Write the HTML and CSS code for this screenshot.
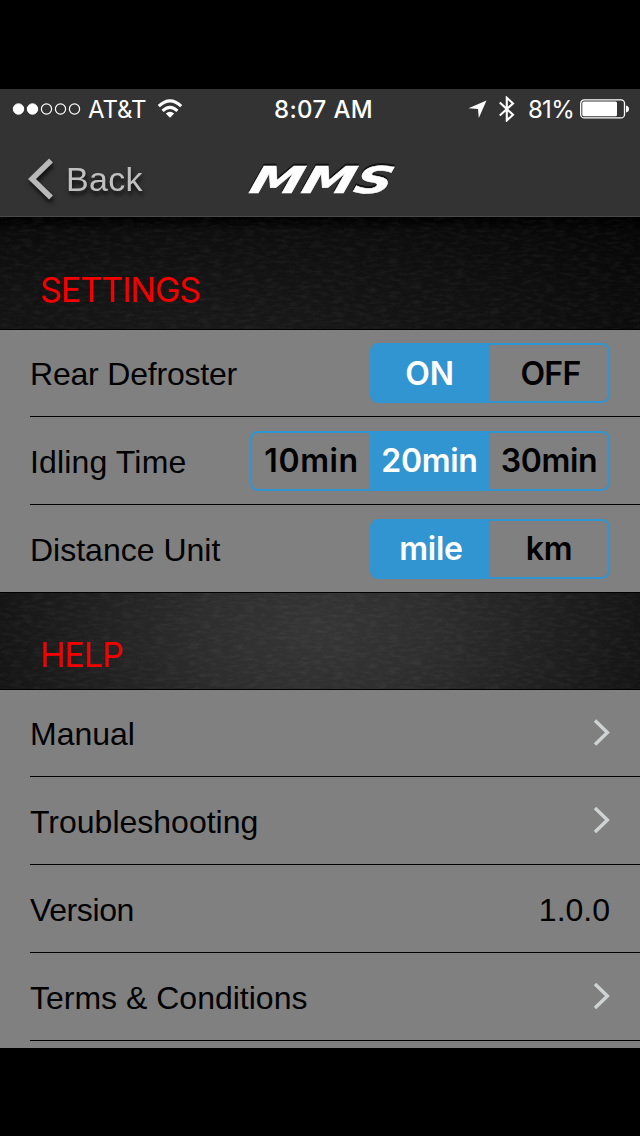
FILE: index.html
```html
<!DOCTYPE html>
<html lang="en">
<head>
    <meta charset="utf-8">
    <title>MMS - Settings</title>
    <link rel="stylesheet" href="styles.css">
</head>
<body>
    <div class="screen">
        <header class="header">
            <div class="statusbar">
                <div class="status-left">
                    <svg width="69" height="14" viewBox="0 0 69 14">
                        <g fill="#fff" stroke="#fff">
                            <circle cx="6.5" cy="7" r="5.2"/>
                            <circle cx="20.5" cy="7" r="5.2"/>
                        </g>
                        <g fill="none" stroke="#fff" stroke-width="1.2">
                            <circle cx="34.5" cy="7" r="5.1"/>
                            <circle cx="48.5" cy="7" r="5.1"/>
                            <circle cx="62.5" cy="7" r="5.1"/>
                        </g>
                    </svg>
                    <span class="carrier">AT&amp;T</span>
                    <svg class="wifi" width="26" height="20" viewBox="0 0 26 20">
                        <g fill="none" stroke="#fff" stroke-width="3">
                            <path d="M1.8 7.2 Q13 -3.4 24.2 7.2"/>
                            <path d="M5.6 11.8 Q13 4.8 20.4 11.8"/>
                        </g>
                        <path d="M8.8 14.6 Q13 10.8 17.2 14.6 L13 18.8 Z" fill="#fff"/>
                    </svg>
                </div>
                <div class="clock">8:07 AM</div>
                <div class="status-right">
                    <svg class="location" width="19" height="19" viewBox="0 0 19 19">
                        <path d="M18.5 .5 L10.8 18 L10 9 L.5 8.2 Z" fill="#fff"/>
                    </svg>
                    <svg class="bluetooth" width="16" height="26" viewBox="0 0 16 26">
                        <path d="M.8 6.6 L14 18.8 L7.8 24.4 V1.8 L14 7.4 L.8 19.6" fill="none" stroke="#fff" stroke-width="2.1"/>
                    </svg>
                    <span class="percent">81%</span>
                    <svg class="battery" width="49" height="20" viewBox="0 0 49 20">
                        <rect x=".7" y=".9" width="43.8" height="18" rx="3.5" fill="none" stroke="#fff" stroke-width="1.3"/>
                        <rect x="2.3" y="2.5" width="34.7" height="14.8" rx="1.5" fill="#fff"/>
                        <path d="M46 6.4 Q49 7.2 49 9.9 Q49 12.6 46 13.4 Z" fill="#fff"/>
                    </svg>
                </div>
            </div>
            <nav class="navbar">
                <a class="back">
                    <svg width="28" height="44" viewBox="0 0 28 44">
                        <path d="M23 2.5 L4 21 L23 39.5" fill="none" stroke="#b8b8b8" stroke-width="5.5"/>
                    </svg>
                    <span>Back</span>
                </a>
                <svg class="logo" width="160" height="60" viewBox="0 0 160 60">
                    <text x="20" y="43" transform="skewX(-16)" textLength="142" lengthAdjust="spacingAndGlyphs">MMS</text>
                </svg>
            </nav>
        </header>

        <section>
            <h2 class="title title-settings">
                <svg class="grain"><rect width="100%" height="100%" filter="url(#leather)"/></svg>
                <span>SETTINGS</span>
            </h2>
            <div class="list">
                <div class="row">
                    <span class="label defroster">Rear Defroster</span>
                    <div class="segmented">
                        <button class="active on">ON</button>
                        <button class="off">OFF</button>
                    </div>
                </div>
                <div class="row">
                    <span class="label idling">Idling Time</span>
                    <div class="segmented three">
                        <button class="ten">10min</button>
                        <button class="active">20min</button>
                        <button>30min</button>
                    </div>
                </div>
                <div class="row last">
                    <span class="label">Distance Unit</span>
                    <div class="segmented">
                        <button class="active">mile</button>
                        <button>km</button>
                    </div>
                </div>
            </div>
        </section>

        <section>
            <h2 class="title title-help">
                <svg class="grain"><rect width="100%" height="100%" filter="url(#leather)"/></svg>
                <span>HELP</span>
            </h2>
            <div class="list">
                <div class="row">
                    <span class="label">Manual</span>
                    <svg class="chevron" width="18" height="28" viewBox="0 0 18 28"><path d="M3 1.5 L15.4 13.5 L3 25.5"/></svg>
                </div>
                <div class="row">
                    <span class="label">Troubleshooting</span>
                    <svg class="chevron" width="18" height="28" viewBox="0 0 18 28"><path d="M3 1 L15.4 13 L3 25"/></svg>
                </div>
                <div class="row">
                    <span class="label version">Version</span>
                    <span class="label">1.0.0</span>
                </div>
                <div class="row">
                    <span class="label">Terms &amp; Conditions</span>
                    <svg class="chevron" width="18" height="28" viewBox="0 0 18 28"><path d="M3 1 L15.4 13 L3 25"/></svg>
                </div>
            </div>
        </section>
    </div>

    <svg class="defs" width="0" height="0">
        <filter id="leather" x="0" y="0" width="100%" height="100%">
            <feTurbulence type="fractalNoise" baseFrequency="0.09 0.32" numOctaves="3" seed="4"/>
            <feColorMatrix values="0 0 0 0 1  0 0 0 0 1  0 0 0 0 1  1.1 0 0 0 -0.45"/>
        </filter>
    </svg>
</body>
</html>
```

FILE: styles.css
```css
* {
    box-sizing: border-box;
}
body {
    margin: 0;
    padding-top: 89px;
    height: 1136px;
    background: #000;
    font-family: "Liberation Sans", Arial, sans-serif;
    overflow: hidden;
}
svg {
    display: block;
    flex-shrink: 0;
}
.screen {
    height: 959px;
    background: #808080;
    overflow: hidden;
}

/* header */
.header {
    height: 128px;
    background: #333;
    border-bottom: 1px solid #4a4a4a;
    color: #fff;
}
.statusbar {
    display: grid;
    grid-template-columns: 1fr auto 1fr;
    align-items: center;
    height: 40px;
    padding: 0 11px 0 12px;
    font-family: Inter, sans-serif;
    font-size: 24px;
}
.status-left,
.status-right {
    display: flex;
    align-items: center;
}
.status-right {
    justify-content: flex-end;
}
.carrier {
    margin-left: 7px;
    letter-spacing: -0.1px;
}
.wifi {
    margin-left: 11px;
}
.clock {
    padding-left: 6px;
    font-weight: 500;
    letter-spacing: 0.4px;
}
.bluetooth {
    margin: 0 13px 0 12px;
}
.percent {
    letter-spacing: -0.7px;
}
.battery {
    margin-left: 6px;
}
.navbar {
    display: grid;
    grid-template-columns: 1fr auto 1fr;
    align-items: center;
    height: 87px;
    padding: 14px 0 0 28px;
}
.back {
    display: flex;
    align-items: center;
    gap: 10px;
    color: #c0c0c0;
    font-size: 34px;
    letter-spacing: 0.3px;
    filter: drop-shadow(1px 4px 2px rgba(0,0,0,0.7));
}
.logo {
    margin-right: 28px;
    filter: drop-shadow(0 -2px 0 #111);
}
.logo text {
    font: bold italic 37px "DejaVu Sans", sans-serif;
    fill: #fff;
    stroke: #fff;
    stroke-width: 0.5px;
}

/* section titles */
.title {
    position: relative;
    display: flex;
    align-items: flex-end;
    margin: 0;
    padding: 0 40px;
    border-bottom: 1px solid #000;
    color: #f50000;
    font-family: Inter, sans-serif;
    font-size: 34px;
    font-weight: 400;
    line-height: 40px;
    letter-spacing: -1px;
}
.title span {
    position: relative;
}
.title-settings {
    height: 113px;
    padding-bottom: 19px;
    background: linear-gradient(#000, transparent 14px), radial-gradient(ellipse at 35% 110%, #1a1a1a, #111 50%, #050505 100%);
}
.title-help {
    height: 97px;
    padding-bottom: 14px;
    background: radial-gradient(ellipse 60% 260% at 50% 40%, #363636, #2e2e2e 30%, #181818 78%, #0e0e0e 100%);
}
.grain {
    position: absolute;
    inset: 0;
    width: 100%;
    height: 100%;
    opacity: 0.09;
}

/* rows */
.row {
    display: flex;
    align-items: center;
    justify-content: space-between;
    height: 88px;
    margin-left: 30px;
    padding-right: 30px;
    border-bottom: 1px solid #000;
    font-size: 32px;
}
.row:first-child {
    height: 87px;
}
.row.last {
    margin-left: 0;
    padding-left: 30px;
}
.label {
    padding-top: 3px;
}
.defroster {
    letter-spacing: -0.2px;
}
.idling {
    letter-spacing: 0.15px;
}
.version {
    letter-spacing: -0.4px;
}
.segmented {
    display: grid;
    grid-template-columns: 1fr 1fr;
    width: 240px;
    height: 60px;
    border: 2px solid #3195d1;
    border-radius: 8px;
    overflow: hidden;
}
.segmented.three {
    width: 360px;
    grid-template-columns: 117px 121px 1fr;
}
.segmented button {
    padding: 0;
    border: none;
    background: none;
    color: #000;
    font-family: Inter, sans-serif;
    font-size: 32px;
    font-weight: 600;
    letter-spacing: -0.3px;
}
.segmented .active {
    background: #3195d1;
    color: #fff;
}
.segmented .on {
    padding-right: 3px;
}
.segmented .off {
    padding-left: 3px;
    letter-spacing: -0.7px;
}
.segmented .ten {
    padding-left: 2px;
    letter-spacing: 0.6px;
}
.chevron {
    fill: none;
    stroke: #d0d3d3;
    stroke-width: 3.4px;
}
.defs {
    position: absolute;
}
```
